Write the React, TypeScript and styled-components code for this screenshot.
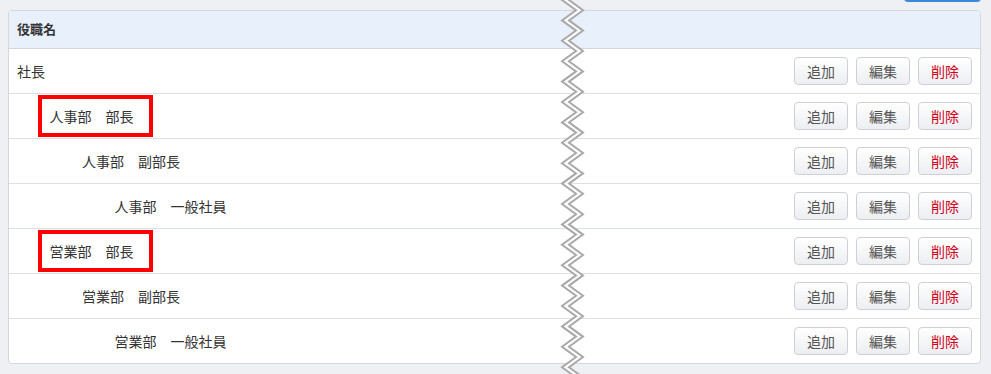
import styled, { createGlobalStyle } from "styled-components";

const GlobalStyle = createGlobalStyle`
  body {
    margin: 0;
    background: #eef0f4;
    font-family: "Noto Sans CJK JP", "Noto Sans", "Liberation Sans", sans-serif;
    color: #333;
  }
`;

interface IRole {
  name: string;
  level: number;
  marked?: boolean;
}

const roles: IRole[] = [
  { name: "社長", level: 0 },
  { name: "人事部　部長", level: 1, marked: true },
  { name: "人事部　副部長", level: 2 },
  { name: "人事部　一般社員", level: 3 },
  { name: "営業部　部長", level: 1, marked: true },
  { name: "営業部　副部長", level: 2 },
  { name: "営業部　一般社員", level: 3 },
];

export default function App() {
  // zigzag tear line, one tooth every 20.4px
  const step = 10.2;
  const left: string[] = [];
  const right: string[] = [];
  for (let i = -1; i < 40; i++) {
    const y = i * step;
    const x = i % 2 === 0 ? 2 : 16;
    left.push(`${x},${y}`);
    right.unshift(`${x + 7},${y}`);
  }
  const band = [...left, ...right].join(" ");

  return (
    <Page>
      <GlobalStyle />
      <Toolbar>
        <PrimaryButton />
      </Toolbar>
      <Panel>
        <HeadRow>役職名</HeadRow>
        {roles.map((role, i) => (
          <Row key={i}>
            <NameCell level={role.level}>
              <Label marked={role.marked}>{role.name}</Label>
            </NameCell>
            <Actions>
              <ActionButton>追加</ActionButton>
              <ActionButton>編集</ActionButton>
              <ActionButton danger>削除</ActionButton>
            </Actions>
          </Row>
        ))}
      </Panel>
      <Tear width="30" height="374" viewBox="0 0 30 374">
        <polygon points={band} fill="#fff" stroke="#a9a9a9" strokeWidth={2} />
      </Tear>
    </Page>
  );
}

const Page = styled.div`
  position: relative;
  height: 374px;
  overflow: hidden;
  padding: 0 10px 0 8px;
  box-sizing: border-box;
`;

const Toolbar = styled.div`
  display: flex;
  justify-content: flex-end;
  margin-top: -28px;
  margin-bottom: 8px;
`;

const PrimaryButton = styled.div`
  width: 77px;
  height: 30px;
  border-radius: 4px;
  background: #3a88d9;
`;

const Panel = styled.div`
  background: #fff;
  border: 1px solid #d4d7dc;
  border-radius: 4px;
  overflow: hidden;
`;

const HeadRow = styled.div`
  height: 38px;
  box-sizing: border-box;
  display: flex;
  align-items: center;
  padding: 0 0 2px 8px;
  background: #e8f0fc;
  border-bottom: 1px solid #d2d6dc;
  font-size: 13px;
  font-weight: bold;
  color: #333;
`;

const Row = styled.div`
  height: 44px;
  display: flex;
  align-items: center;
  justify-content: space-between;
  border-bottom: 1px solid #dcdfe3;
  &:last-child {
    border-bottom: none;
  }
`;

const NameCell = styled.div<{ level: number }>`
  padding: 0 0 1px ${(p) => 8 + p.level * 32.5}px;
  font-size: 14px;
`;

const Label = styled.span<{ marked?: boolean }>`
  position: relative;
  display: inline-block;
  line-height: 20px;
  &::after {
    content: "";
    display: ${(p) => (p.marked ? "block" : "none")};
    position: absolute;
    left: -12px;
    right: -19px;
    top: -11px;
    bottom: -11px;
    border: 4px solid #ff0000;
  }
`;

const Actions = styled.div`
  display: flex;
  gap: 8px;
  padding-right: 8px;
`;

const ActionButton = styled.button<{ danger?: boolean }>`
  width: 54px;
  height: 28px;
  padding: 0;
  border: 1px solid #cdd0d5;
  border-radius: 4px;
  background: linear-gradient(#ffffff, #eceef2);
  font-family: inherit;
  font-size: 14px;
  color: ${(p) => (p.danger ? "#d0021b" : "#555")};
`;

const Tear = styled.svg`
  position: absolute;
  top: 0;
  left: 560px;
`;
